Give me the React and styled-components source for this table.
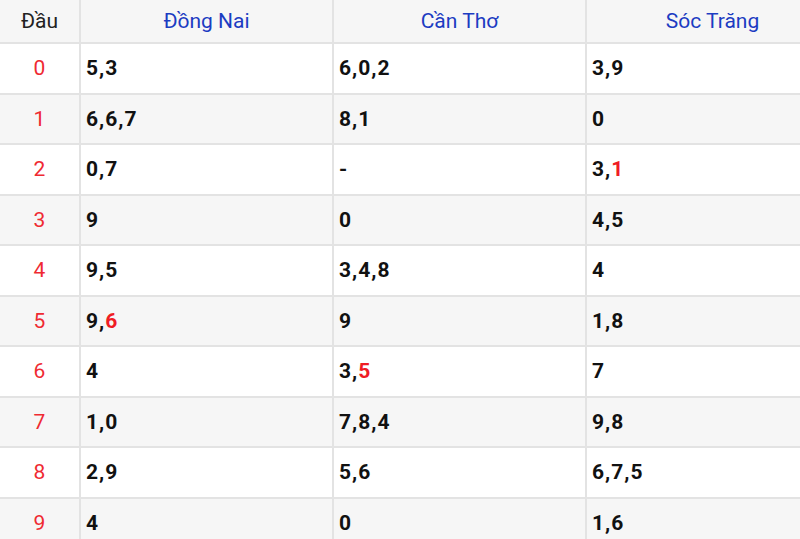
import React from "react";
import styled, { createGlobalStyle } from "styled-components";

const GlobalStyle = createGlobalStyle`
  html, body {
    margin: 0;
    padding: 0;
    background: #ffffff;
    overflow: hidden;
  }
  body {
    font-family: Roboto, "Liberation Sans", Arial, sans-serif;
  }
`;

const stations = ["Đồng Nai", "Cần Thơ", "Sóc Trăng"];

// each value: [digit, isSpecial]
const rows = [
  [[["5"], ["3"]], [["6"], ["0"], ["2"]], [["3"], ["9"]]],
  [[["6"], ["6"], ["7"]], [["8"], ["1"]], [["0"]]],
  [[["0"], ["7"]], [["-"]], [["3"], ["1", true]]],
  [[["9"]], [["0"]], [["4"], ["5"]]],
  [[["9"], ["5"]], [["3"], ["4"], ["8"]], [["4"]]],
  [[["9"], ["6", true]], [["9"]], [["1"], ["8"]]],
  [[["4"]], [["3"], ["5", true]], [["7"]]],
  [[["1"], ["0"]], [["7"], ["8"], ["4"]], [["9"], ["8"]]],
  [[["2"], ["9"]], [["5"], ["6"]], [["6"], ["7"], ["5"]]],
  [[["4"]], [["0"]], [["1"], ["6"]]],
];

const Table = styled.table`
  width: 840px;
  margin-left: -2px;
  border-collapse: collapse;
  table-layout: fixed;
`;

const HeadRow = styled.tr`
  background: #f6f6f6;
`;

const HeadCell = styled.th`
  height: 42px;
  padding: 0;
  border: 2px solid #e3e3e3;
  border-top: none;
  font-size: 21px;
  font-weight: 400;
  text-align: center;
  vertical-align: middle;
  color: ${(p) => (p.$plain ? "#222222" : "#1c3cc2")};
`;

const Row = styled.tr`
  background: ${(p) => (p.$odd ? "#f6f6f6" : "#ffffff")};
`;

const HeadNum = styled.td`
  height: 48.5px;
  padding: 0;
  border: 2px solid #e3e3e3;
  text-align: center;
  vertical-align: middle;
  font-size: 21px;
  color: #ef2a32;
`;

const Cell = styled.td`
  height: 48.5px;
  padding: 0 0 0 5px;
  border: 2px solid #e3e3e3;
  vertical-align: middle;
  font-size: 21px;
  font-weight: 700;
  letter-spacing: 1px;
  color: #111111;
`;

const Digit = styled.span`
  color: ${(p) => (p.$hot ? "#ef1c24" : "inherit")};
`;

const Values = ({ items }) =>
  items.map(([d, hot], i) => (
    <React.Fragment key={i}>
      {i > 0 && ","}
      <Digit $hot={hot}>{d}</Digit>
    </React.Fragment>
  ));

export default function App() {
  return (
    <>
      <GlobalStyle />
      <Table>
        <colgroup>
          <col style={{ width: 81 }} />
          <col style={{ width: 253 }} />
          <col style={{ width: 253 }} />
          <col style={{ width: 253 }} />
        </colgroup>
        <thead>
          <HeadRow>
            <HeadCell $plain>Đầu</HeadCell>
            {stations.map((s) => (
              <HeadCell key={s}>{s}</HeadCell>
            ))}
          </HeadRow>
        </thead>
        <tbody>
          {rows.map((r, i) => (
            <Row key={i} $odd={i % 2 === 1}>
              <HeadNum>{i}</HeadNum>
              {r.map((items, j) => (
                <Cell key={j}>
                  <Values items={items} />
                </Cell>
              ))}
            </Row>
          ))}
        </tbody>
      </Table>
    </>
  );
}
